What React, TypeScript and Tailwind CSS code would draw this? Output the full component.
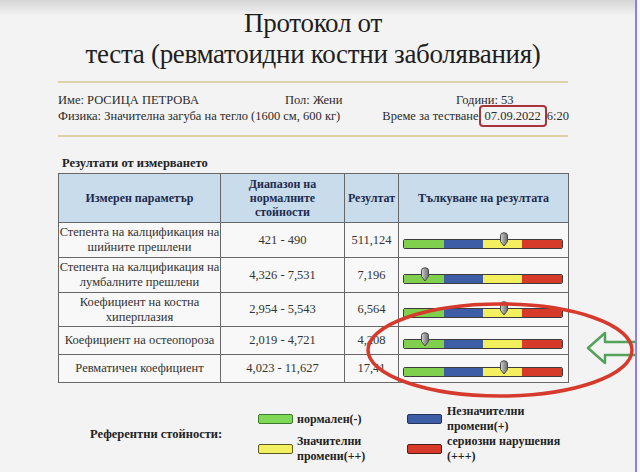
import React from 'react'

// Протокол от теста — таблица с резултати, цветни скали и легенда.
// Червената елипса и зелената стрелка са пояснения, нарисувани върху екрана.

type Row = {
  name: string[]
  range: string
  value: string
  markerClass: string
  heightClass: string
}

const rows: Row[] = [
  { name: ['Степента на калцификация на', 'шийните прешлени'], range: '421 - 490', value: '511,124', markerClass: 'left-[96px]', heightClass: 'h-[35px]' },
  { name: ['Степента на калцификация на', 'лумбалните прешлени'], range: '4,326 - 7,531', value: '7,196', markerClass: 'left-[17px]', heightClass: 'h-[35px]' },
  { name: ['Коефициент на костна', 'хиперплазия'], range: '2,954 - 5,543', value: '6,564', markerClass: 'left-[96px]', heightClass: 'h-[34px]' },
  { name: ['Коефициент на остеопороза'], range: '2,019 - 4,721', value: '4,208', markerClass: 'left-[17px]', heightClass: 'h-[28px]' },
  { name: ['Ревматичен коефициент'], range: '4,023 - 11,627', value: '17,41', markerClass: 'left-[96px]', heightClass: 'h-[28px]' },
]

// Сив показалец над скалата
function Marker({ className }: { className: string }) {
  return (
    <svg className={`absolute top-0 ${className}`} width="10" height="15" viewBox="0 0 10 15">
      <defs>
        <linearGradient id="mk" x1="0" x2="1" y1="0" y2="0">
          <stop offset="0" stopColor="#d4d4d4" />
          <stop offset="0.5" stopColor="#9a9a9a" />
          <stop offset="1" stopColor="#6c6c6c" />
        </linearGradient>
      </defs>
      <path d="M1.5 3.2 Q1.5 0.8 5 0.8 Q8.5 0.8 8.5 3.2 L8.5 9.5 L5 14 L1.5 9.5 Z" fill="url(#mk)" stroke="#4a4a4a" strokeWidth="1" />
    </svg>
  )
}

function Scale({ markerClass }: { markerClass: string }) {
  return (
    <div className="relative h-[17px] w-[160px]">
      <div className="absolute bottom-0 left-0 flex h-[10px] w-[160px] overflow-hidden rounded-[2px] border border-[#3c3c3c]">
        <div className="w-[40px] bg-[#80d04e]" />
        <div className="w-[39px] bg-[#3d5ea6]" />
        <div className="w-[39px] bg-[#f3ef5e]" />
        <div className="flex-1 bg-[#d63b29]" />
      </div>
      <Marker className={markerClass} />
    </div>
  )
}

function LegendItem({ swatch, lines, gap }: { swatch: string; lines: string[]; gap: string }) {
  return (
    <div className={`flex items-center ${gap}`}>
      <div className={`h-[10px] w-[35px] shrink-0 rounded-[2px] border-[1.5px] ${swatch}`} />
      <div className="text-[12px] font-bold leading-[15px] text-[#222]">
        {lines.map((l) => (
          <div key={l}>{l}</div>
        ))}
      </div>
    </div>
  )
}

export default function App() {
  return (
    <div className="relative flex h-[472px] w-[640px] overflow-hidden bg-[#f3f3f3] font-['Liberation_Serif',serif] text-[#2b2b2b]">
      {/* сив преход в горния край на снимката */}
      <div className="pointer-events-none absolute inset-x-0 top-0 h-[16px] bg-gradient-to-b from-[#d5d5d5] to-[#f3f3f3]" />
      <div className="relative w-[635px] shrink-0">
        <div className="ml-[58px] w-[510px]">
          {/* Заглавие */}
          <h1 className="relative pt-[8px] text-center text-[27px] leading-[31px] font-normal tracking-[-0.3px] text-[#1e1e1e]">
            Протокол от
            <br />
            теста (ревматоидни костни заболявания)
          </h1>

          <div className="mt-[11px] h-[2px] bg-[#ddd3ab]" />

          {/* Данни за пациента */}
          <div className="mt-[9px] text-[12.5px] leading-[16px]">
            <div className="flex">
              <span className="w-[227px]">Име: РОСИЦА ПЕТРОВА</span>
              <span className="w-[171px]">Пол: Жени</span>
              <span>Години: 53</span>
            </div>
            <div className="flex justify-between">
              <span>Физика: Значителна загуба на тегло (1600 см, 600 кг)</span>
              <span className="-mr-[1px]">
                Време за тестване
                <span className="rounded-[4px] border-2 border-[#a8343b] px-[4px] py-[2px]">07.09.2022</span>
                6:20
              </span>
            </div>
          </div>

          <div className="mt-[11px] h-[2px] bg-[#ddd3ab]" />

          <div className="mt-[18px] pl-[4px] text-[12.5px] leading-[16px] font-bold text-[#222]">Резултати от измерването</div>

          {/* Таблица с резултати */}
          <table className="mt-[2px] w-[510px] table-fixed border-collapse text-center text-[12.5px] leading-[15px] text-[#333]">
            <colgroup>
              <col className="w-[162px]" />
              <col className="w-[124px]" />
              <col className="w-[54px]" />
              <col className="w-[170px]" />
            </colgroup>
            <thead>
              <tr className="h-[49px] bg-[#c8dcec] text-[12px] leading-[14px] font-bold text-[#1d2b4e]">
                <th className="border border-[#676767] px-0">Измерен параметър</th>
                <th className="border border-[#676767] px-0">
                  Диапазон на
                  <br />
                  нормалните
                  <br />
                  стойности
                </th>
                <th className="border border-[#676767] px-0">Резултат</th>
                <th className="border border-[#676767] px-0">Тълкуване на резултата</th>
              </tr>
            </thead>
            <tbody className="bg-[#f8f8f8]">
              {rows.map((r) => (
                <tr key={r.name.join(' ')} className={r.heightClass}>
                  <td className="border border-[#676767] px-0">
                    {r.name.map((l) => (
                      <div key={l}>{l}</div>
                    ))}
                  </td>
                  <td className="border border-[#676767]">{r.range}</td>
                  <td className="border border-[#676767] px-0">{r.value}</td>
                  <td className="border border-[#676767] pl-[4px]">
                    <Scale markerClass={r.markerClass} />
                  </td>
                </tr>
              ))}
            </tbody>
          </table>

          {/* Легенда */}
          <div className="mt-[21px] flex">
            <div className="flex w-[200px] items-center pl-[32px] text-[12.5px] font-bold text-[#222]">Референтни стойности:</div>
            <div className="grid grid-cols-[149px_1fr] grid-rows-[30px_30px] items-center">
              <LegendItem swatch="border-[#3d7a2c] bg-[#7fd957]" lines={['нормален(-)']} gap="gap-[4px]" />
              <LegendItem swatch="border-[#22335c] bg-[#3d5ea6]" lines={['Незначителни', 'промени(+)']} gap="gap-[5px]" />
              <LegendItem swatch="border-[#5b5a1e] bg-[#f3ef62]" lines={['Значителни', 'промени(++)']} gap="gap-[4px]" />
              <LegendItem swatch="border-[#4a1d18] bg-[#d83a2a]" lines={['сериозни нарушения', '(+++)']} gap="gap-[5px]" />
            </div>
          </div>
        </div>

        {/* Пояснения върху екрана */}
        <svg className="pointer-events-none absolute inset-0" width="635" height="472" viewBox="0 0 635 472">
          <polyline points="636,342 605,342 605,333 588,348 605,363 605,355 636,355" fill="none" stroke="#54a15b" strokeWidth="2.5" strokeLinejoin="round" />
          <ellipse cx="500" cy="350" rx="132" ry="46" fill="none" stroke="#d63a2c" strokeWidth="3.5" />
        </svg>
      </div>
      <div className="relative w-[2px] shrink-0 bg-[#8c7ef2]" />
      <div className="relative flex-1 bg-[#f9f9f9]" />
    </div>
  )
}
